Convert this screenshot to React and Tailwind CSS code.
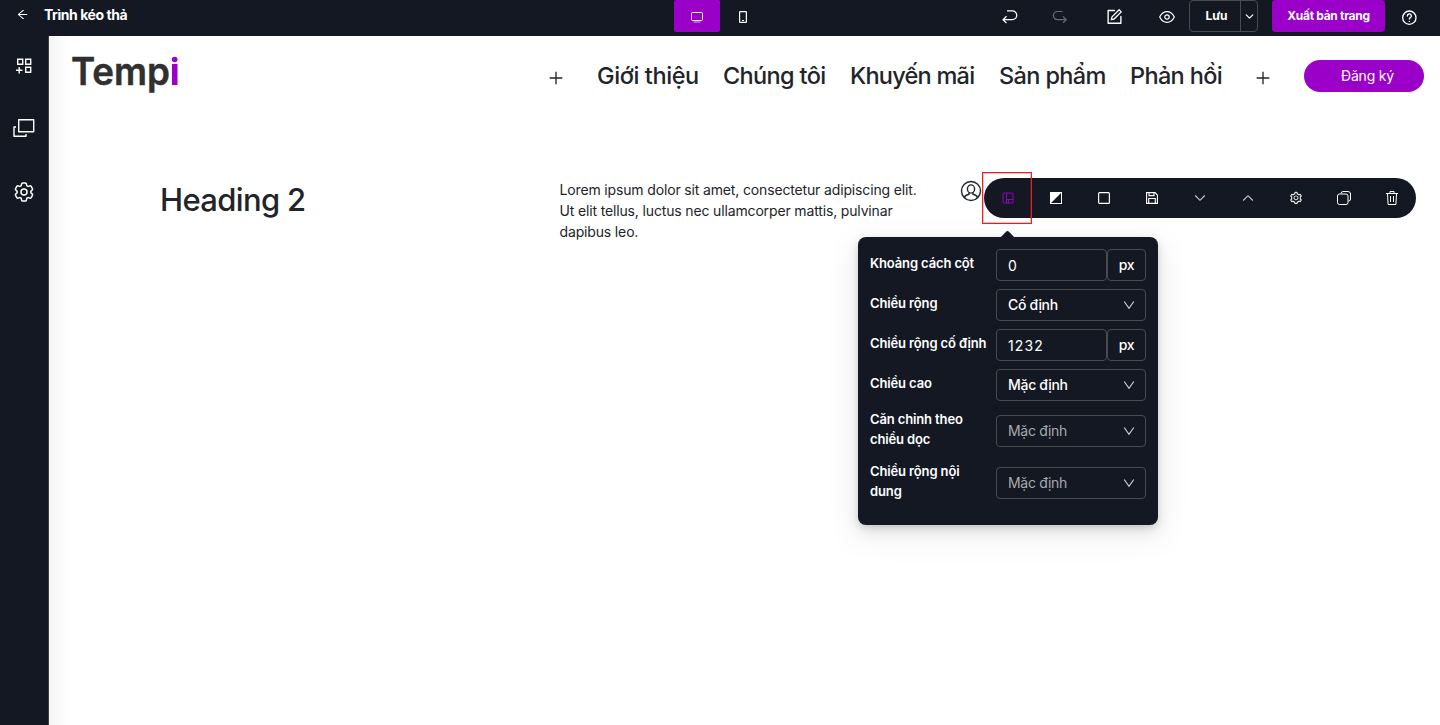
import React from "react";
import { AiOutlinePlus, AiOutlineArrowLeft, AiOutlineSetting } from "react-icons/ai";
import { HiOutlineCog6Tooth } from "react-icons/hi2";
import { ChevronDown } from "lucide-react";

function Icon({ size = 16, w = 1.5, className = "", children }) {
  return (
    <svg width={size} height={size} viewBox="0 0 24 24" fill="none" stroke="currentColor" strokeWidth={w} strokeLinecap="round" strokeLinejoin="round" className={"shrink-0 " + className}>
      {children}
    </svg>
  );
}

function TopBar() {
  return (
    <header className="flex h-9 shrink-0 items-start bg-[#141823] text-white">
      <div className="flex h-8 w-[674px] items-center pl-[16px]">
        <AiOutlineArrowLeft size={13} className="mb-[3px]" />
        <span className="mb-1 ml-[15px] text-[14px] font-bold tracking-[-0.45px]">Trình kéo thả</span>
      </div>
      <div className="flex h-8 w-[46px] items-center justify-center rounded-[2px] bg-[#9b00c8]">
        <svg width="12" height="12" viewBox="0 0 12 12" className="mt-px" fill="none" stroke="currentColor"><rect x="0.5" y="1.500" width="11" height="8" rx="1" /><path d="M2.500 11h7" opacity=".7" /></svg>
      </div>
      <div className="flex h-8 w-[46px] items-center justify-center">
        <svg width="8" height="12" viewBox="0 0 8 12" className="mt-px" fill="none" stroke="currentColor" strokeWidth="1.2"><rect x="0.6" y="0.6" width="6.8" height="10.8" rx="0.6" /><path d="M3 9.5h2" /></svg>
      </div>
      <div className="flex h-8 flex-1 items-center">
        <svg width="16" height="14" viewBox="0 0 16 14" fill="none" stroke="currentColor" strokeWidth="1.300" className="mt-0.5 ml-[236px] shrink-0"><path d="M5 .8h5.300a4.300 4.300 0 0 1 0 8.900H1M4.500 6.300 1.100 9.700l3.400 3.400" /></svg>
        <svg width="16" height="14" viewBox="0 0 16 14" fill="none" stroke="currentColor" strokeWidth="1.200" className="mt-0.5 ml-[34px] shrink-0 text-[#686b75]"><path d="M10.500 1.500H5.500a4 4 0 0 0 0 8.200H14M11 6.500l3.200 3.200L11 12.900" /></svg>
        <Icon size={17} w={1.900} className="mt-px ml-[38px]"><path d="M12 3.500H3V21.500h18V12M8.500 12.500 18.500 2.500l3 3L11.500 15.500l-4 1z" /></Icon>
        <Icon size={16} w={1.8} className="mt-px ml-[36px]"><path d="M1 12s4-8 11-8 11 8 11 8-4 8-11 8S1 12 1 12Z" /><circle cx="12" cy="12" r="3.300" /></Icon>
        <div className="ml-[14px] flex h-8 w-[69px] shrink-0 items-stretch rounded-[4px] border border-[#4a4b50]">
          <span className="flex w-[51px] items-center justify-center border-r border-[#4a4b50] pl-[3px] text-[12px] font-bold tracking-[-0.1px]">Lưu</span>
          <span className="flex flex-1 items-center justify-center"><ChevronDown size={13} strokeWidth={2.200} /></span>
        </div>
        <button className="ml-[14px] h-8 w-[113px] shrink-0 rounded-[4px] bg-[#9b00c8] text-[12px] font-bold tracking-[-0.3px]">Xuất bản trang</button>
        <Icon size={16} w={2} className="mt-[3px] ml-4"><circle cx="12.500" cy="11.500" r="10" /><path d="M9.500 9a3 3 0 1 1 4.500 2.500c-1 .6-1.500 1-1.500 2M12.500 17v.1" /></Icon>
      </div>
    </header>
  );
}

function SideBar() {
  return (
    <aside className="flex w-[49px] shrink-0 flex-col items-center border-r border-[#3d4044] bg-[#141823] pt-[22px] text-white">
      <svg width="16" height="18" viewBox="0 0 16 18" fill="none" stroke="currentColor" strokeWidth="1.400"><path d="M1.700 1.200h5v5h-5zM9.700 1.200h5v5h-5zM9.700 9.200h5v5h-5zM0 12.200h6.500M3.200 9v6.500" /></svg>
      <svg width="22" height="20" viewBox="0 0 22 20" className="mt-[42px]" fill="none" stroke="currentColor" strokeWidth="1.400" strokeLinejoin="round"><path d="M5.700 1.700h15v12h-15zM3 9H1v9.300h12V16" /></svg>
      <HiOutlineCog6Tooth size={24} className="mt-[42px]" />
    </aside>
  );
}

function SiteHeader() {
  return (
    <div className="flex h-20 items-center text-[#212529]">
      <svg width="110" height="44" viewBox="0 0 110 44" className="ml-[22px] shrink-0 overflow-visible">
        <text x="0" y="31" fontFamily="Inter, sans-serif" fontSize="38" fontWeight="600" textLength="99" lengthAdjust="spacingAndGlyphs" fill="#303030" stroke="#303030" strokeWidth="0.5">Temp</text>
        <rect x="101" y="10" width="5.500" height="21" fill="#9b00c8" /><circle cx="103.700" cy="5.500" r="2.800" fill="#9b00c8" />
      </svg>
      <AiOutlinePlus size={18} className="mt-1 ml-[366px] shrink-0" />
      <nav className="ml-[32px] flex gap-6 text-[23.500px] leading-9 font-medium whitespace-nowrap">
        <span className="w-[102px] tracking-[-0.4px]">Giới thiệu</span>
        <span className="w-[103px] tracking-[-0.65px]">Chúng tôi</span>
        <span className="w-[125px] tracking-[-0.75px]">Khuyến mãi</span>
        <span className="w-[107px] tracking-[-0.62px]">Sản phẩm</span>
        <span className="w-[93px] tracking-[-0.65px]">Phản hồi</span>
      </nav>
      <AiOutlinePlus size={18} className="mt-1 ml-auto shrink-0" />
      <button className="mr-4 ml-[32px] h-8 w-[120px] rounded-full bg-[#9b00c8] pb-px pl-[7px] text-[14px] tracking-[-0.2px] text-white">Đăng ký</button>
    </div>
  );
}

function Chevron({ h, className = "" }) {
  return (
    <svg width="12" height="10" viewBox="0 0 12 10" fill="none" stroke="currentColor" strokeWidth="1.100" className={className}>
      <path d={h === "tall" ? "M1.200 1.500 6 8.200l4.800-6.700" : h === "up" ? "M1.200 7.500 6 2.700l4.800 4.800" : "M1.200 2.500 6 7.300l4.800-4.800"} />
    </svg>
  );
}

function Toolbar() {
  const cell = "flex w-12 items-center justify-center";
  return (
    <div className="flex h-10 w-[432px] rounded-full bg-[#141823] text-white">
      <div className={cell + " text-[#8d05b5]"}><svg width="12" height="12" viewBox="0 0 12 12" fill="none" stroke="currentColor"><rect x="1" y="1" width="10" height="10" rx=".8" /><path d="M4.500 1v10M4.500 7.500H11M6.500 7.500V11" /></svg></div>
      <div className={cell}><svg width="12" height="12" viewBox="0 0 12 12"><rect x=".5" y=".5" width="11" height="11" fill="none" stroke="white" /><path d="M0 0h12L0 12z" fill="white" /></svg></div>
      <div className={cell}><svg width="12" height="12" viewBox="0 0 12 12" fill="none" stroke="currentColor" strokeWidth="1.200"><rect x=".6" y=".6" width="10.800" height="10.800" rx="1" /></svg></div>
      <div className={cell}><svg width="12" height="12" viewBox="0 0 12 12" fill="none" stroke="currentColor" strokeWidth="1.100"><path d="M1.200.6H9l2.400 2.400v8.400H.6V.6zM3 .6v3h5v-3M2.700 11.400V6.500h6.600v4.900" /></svg></div>
      <div className={cell + " text-[#c9cace]"}><Chevron /></div>
      <div className={cell + " text-[#c9cace]"}><Chevron h="up" /></div>
      <div className={cell}><AiOutlineSetting size={14} /></div>
      <div className={cell}><svg width="14" height="14" viewBox="0 0 14 14" fill="none" stroke="currentColor"><rect x=".5" y="3" width="10.500" height="10.500" rx="2" /><path d="M4 2.500Q4.200.5 6 .5h5q2.500 0 2.500 2.500v5q0 2-2 2" /></svg></div>
      <div className={cell}><svg width="12" height="14" viewBox="0 0 12 14" fill="none" stroke="currentColor"><path d="M0 2.500h12M4 2.500V.5h4v2M1.500 2.500l.6 11h7.800l.6-11M4.500 5v6M7.500 5v6" /></svg></div>
    </div>
  );
}

const box = "flex h-8 items-center rounded-[4px] border border-[#4a4b50] text-[14px]";
function Label({ children }) {
  return <span className="block w-[126px] shrink-0 text-[13px] leading-5 font-semibold tracking-[-0.13px]">{children}</span>;
}
function NumberRow({ label, value }) {
  return (
    <div className="flex h-8 items-start"><div className="flex h-7 items-center"><Label>{label}</Label></div>
      <div className={box + " w-[111px] pt-px pl-[11px] tracking-[1.1px]"}>{value}</div>
      <div className={box + " w-[39px] justify-center pb-px font-medium tracking-[-0.3px]"}>px</div>
    </div>
  );
}
function SelectRow({ label, value, muted }) {
  return (
    <div className={muted ? "flex h-11 items-center" : "flex h-8 items-start"}>
      <div className={muted ? "mb-1" : "flex h-7 items-center"}><Label>{label}</Label></div>
      <div className={box + " w-[150px] justify-between pr-[10px] pb-px pl-[11px] tracking-[-0.3px]"}>
        <span className={muted ? "text-[#a8a9ad]" : "font-[450]"}>{value}</span><Chevron h="tall" className="text-[#d5d6d9]" />
      </div>
    </div>
  );
}

function Popover() {
  return (
    <div className="absolute top-[59px] -left-[126px] h-[288px] w-[300px] rounded-lg bg-[#141823] px-3 pt-3 text-white shadow-[0_6px_16px_rgba(0,0,0,0.08),0_3px_6px_rgba(0,0,0,0.12),0_9px_28px_8px_rgba(0,0,0,0.05)]">
      <svg width="18" height="8" viewBox="0 0 18 8" className="absolute -top-[7px] left-[140px]"><path d="M0 8C2 8 3 7 8 1.700Q9.500.4 11 1.700C16 7 17 8 18 8z" fill="#141823" /></svg>
      <div className="flex flex-col gap-2">
        <NumberRow label="Khoảng cách cột" value="0" />
        <SelectRow label="Chiều rộng" value="Cố định" />
        <NumberRow label="Chiều rộng cố định" value="1232" />
        <SelectRow label="Chiều cao" value="Mặc định" />
        <SelectRow label={<>Căn chỉnh theo<br />chiều dọc</>} value="Mặc định" muted />
        <SelectRow label={<>Chiều rộng nội<br />dung</>} value="Mặc định" muted />
      </div>
    </div>
  );
}

export default function App() {
  return (
    <div className="flex h-[725px] w-[1440px] flex-col overflow-hidden bg-white font-['Inter','Noto_Sans',sans-serif]">
      <TopBar />
      <div className="flex min-h-0 flex-1">
        <SideBar />
        <main className="flex min-w-0 flex-1 flex-col bg-[linear-gradient(to_right,#f5f5f5,#fff_20px)]">
          <SiteHeader />
          <section className="flex items-start pt-[62px] pl-[111px] text-[#212529]">
            <h2 className="mt-[2px] w-[399.500px] text-[31px] leading-[40px] font-medium tracking-[-0.65px]">Heading 2</h2>
            <p className="mt-px w-[400.500px] text-[14px] leading-[21px] tracking-[-0.15px]">Lorem ipsum dolor sit amet, consectetur adipiscing elit.<br />Ut elit tellus, luctus nec ullamcorper mattis, pulvinar<br />dapibus leo.</p>
            <svg width="22" height="22" viewBox="0 0 22 22" className="mt-0.5 shrink-0" fill="none" stroke="currentColor" strokeWidth="1.400"><circle cx="11" cy="11" r="9.500" /><ellipse cx="11" cy="9" rx="3.600" ry="4.100" /><path d="M4.400 17.800c.8-2.500 2.300-3.300 4.600-3.500V12.500M17.600 17.800c-.8-2.500-2.300-3.300-4.600-3.500V12.500" /></svg>
            <div className="relative ml-0.5">
              <Toolbar />
              <div className="absolute -top-[6px] -left-[2px] h-[52px] w-[50px] border border-[#e32227] shadow-[inset_0_0_0_1px_rgba(227,34,39,0.3)]" />
              <Popover />
            </div>
          </section>
        </main>
      </div>
    </div>
  );
}
